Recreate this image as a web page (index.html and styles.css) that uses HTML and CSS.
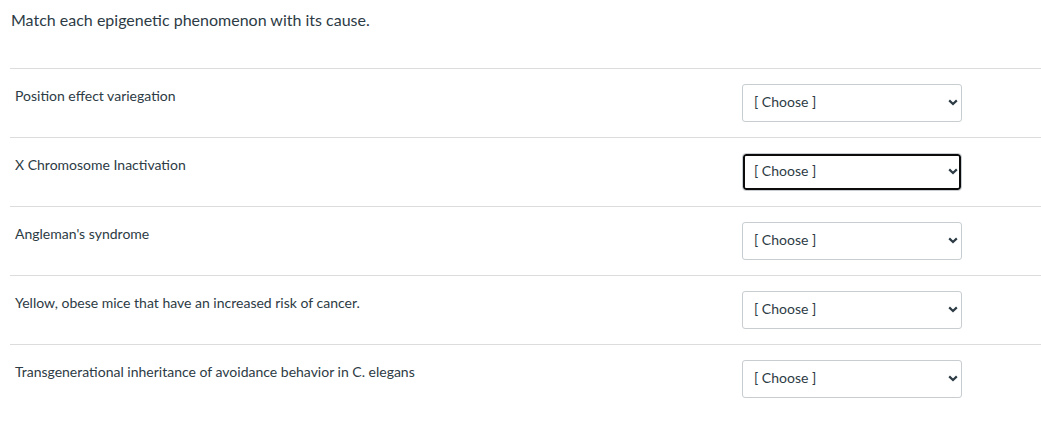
FILE: index.html
```html
<!DOCTYPE html>
<html lang="en">
<head>
<meta charset="utf-8">
<title>Matching question</title>
<link rel="stylesheet" href="styles.css">
</head>
<body>
<div class="question">
  <p class="prompt">Match each epigenetic phenomenon with its cause.</p>
  <div class="answers">
    <div class="row">
      <div class="label">Position effect variegation</div>
      <div class="select-wrap">
        <select class="choice"><option>[ Choose ]</option></select>
        <svg class="chev" width="10" height="7" viewBox="0 0 10 7"><path d="M1.2 1.4 L5 5 L8.8 1.4" fill="none" stroke="#2d3b45" stroke-width="2.2"/></svg>
      </div>
    </div>
    <div class="row">
      <div class="label">X Chromosome Inactivation</div>
      <div class="select-wrap">
        <select class="choice focused"><option>[ Choose ]</option></select>
        <svg class="chev" width="10" height="7" viewBox="0 0 10 7"><path d="M1.2 1.4 L5 5 L8.8 1.4" fill="none" stroke="#2d3b45" stroke-width="2.2"/></svg>
      </div>
    </div>
    <div class="row">
      <div class="label">Angleman's syndrome</div>
      <div class="select-wrap">
        <select class="choice"><option>[ Choose ]</option></select>
        <svg class="chev" width="10" height="7" viewBox="0 0 10 7"><path d="M1.2 1.4 L5 5 L8.8 1.4" fill="none" stroke="#2d3b45" stroke-width="2.2"/></svg>
      </div>
    </div>
    <div class="row">
      <div class="label">Yellow, obese mice that have an increased risk of cancer.</div>
      <div class="select-wrap">
        <select class="choice"><option>[ Choose ]</option></select>
        <svg class="chev" width="10" height="7" viewBox="0 0 10 7"><path d="M1.2 1.4 L5 5 L8.8 1.4" fill="none" stroke="#2d3b45" stroke-width="2.2"/></svg>
      </div>
    </div>
    <div class="row">
      <div class="label">Transgenerational inheritance of avoidance behavior in C. elegans</div>
      <div class="select-wrap">
        <select class="choice"><option>[ Choose ]</option></select>
        <svg class="chev" width="10" height="7" viewBox="0 0 10 7"><path d="M1.2 1.4 L5 5 L8.8 1.4" fill="none" stroke="#2d3b45" stroke-width="2.2"/></svg>
      </div>
    </div>
  </div>
</div>
</body>
</html>
```
FILE: styles.css
```css
html, body {
  margin: 0;
  padding: 0;
  background: #ffffff;
}
body {
  font-family: Lato, "Liberation Sans", sans-serif;
  color: #2d3b45;
}
.question {
  padding: 0 0 0 10px;
}
.prompt {
  margin: 0;
  padding: 8px 0 0 1px;
  font-size: 16px;
  line-height: 24px;
}
.answers {
  margin-top: 36px;
}
.row {
  display: grid;
  grid-template-columns: 732px 220px;
  border-top: 1px solid #dcdcdc;
  padding: 15px 0 15px;
}
.label {
  padding: 2px 0 0 5px;
  font-size: 14px;
  line-height: 20px;
}
.select-wrap {
  position: relative;
  height: 38px;
}
.choice {
  -webkit-appearance: none;
  appearance: none;
  box-sizing: border-box;
  width: 220px;
  height: 38px;
  margin: 0;
  padding: 0 24px 3px 11px;
  border: 1px solid #c7cdd1;
  border-radius: 3px;
  background: #ffffff;
  font-family: Lato, "Liberation Sans", sans-serif;
  font-size: 14px;
  color: #2d3b45;
  outline: none;
}
.choice.focused {
  box-shadow: inset 0 0 0 2px #0c0c0c;
  border-radius: 4px;
}
.chev {
  position: absolute;
  left: 206px;
  top: 15px;
  pointer-events: none;
}
```
